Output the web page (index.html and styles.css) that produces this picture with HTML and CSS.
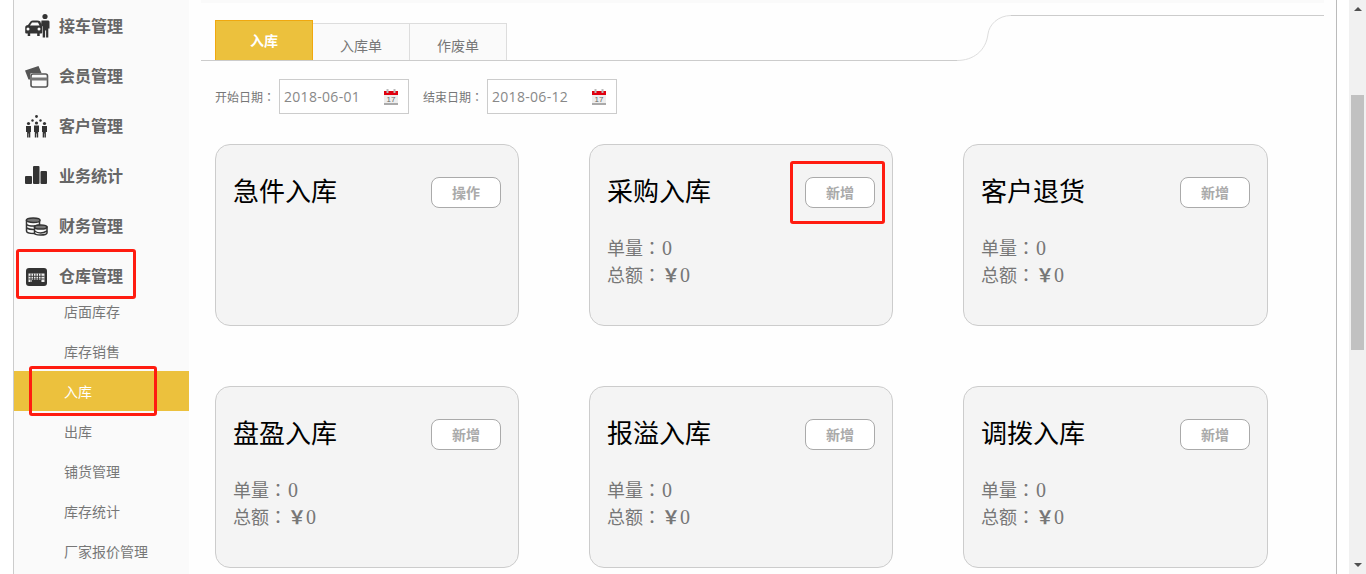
FILE: index.html
```html
<!DOCTYPE html>
<html lang="zh-CN">
<head>
<meta charset="utf-8">
<title>入库</title>
<link rel="stylesheet" href="styles.css">
</head>
<body>
<div class="window">
  <aside class="sidebar">
    <div class="nav-row">
      <svg class="nav-icon" viewBox="0 0 26 26"><circle cx="21" cy="4.500" r="2.600" fill="#333"/><path d="M17.500 8.500h7l1 1v7l-1.200 0v9h-2.200v-7h-1v7h-2.400v-11l-1.700-1z" fill="#333"/><path d="M4 13l2.500-3.500q1-1 2.500-1h4q2 0 3.500 1v.5l1 3q.7.800.7 2v5.500q0 1-1 1h-1.500v2.500h-2.500v-2.500h-7v2.500h-2.500v-2.500h-1.500q-1 0-1-1v-5q0-1.500 1-2z" fill="#333"/><path d="M6 13.500l2-3h6l1.500 3z" fill="#fafafa"/><circle cx="4" cy="17" r="1.500" fill="#fafafa"/><circle cx="15" cy="17" r="1.500" fill="#fafafa"/></svg>
      <span>接车管理</span>
    </div>
    <div class="nav-row">
      <svg class="nav-icon" viewBox="0 0 26 26"><path d="M1 8.500l13.500-4.500 3 7h-9.500q-2 0-2 2v4.500h-1.500z" fill="#555"/><rect x="7" y="12" width="16.500" height="13" rx="2" fill="#fafafa" stroke="#555" stroke-width="1.600"/><rect x="7" y="15.500" width="16.500" height="3" fill="#777"/></svg>
      <span>会员管理</span>
    </div>
    <div class="nav-row">
      <svg class="nav-icon" viewBox="0 0 26 26" fill="#333"><circle cx="12.500" cy="4.500" r="1.400"/><circle cx="8.500" cy="8.500" r="1.200"/><circle cx="16.500" cy="8.500" r="1.200"/><circle cx="4.500" cy="11.500" r="1.600"/><circle cx="12.500" cy="11" r="1.600"/><circle cx="20.500" cy="11.500" r="1.600"/><path d="M2 14h5v6h-.7v5.500h-1.400v-4h-.4v4h-1.400v-5.500h-1.100z"/><path d="M10 13.500h5v6.500h-.8v5.500h-1.400v-4h-.6v4h-1.400v-5.500h-.8z"/><path d="M18 14h5v6h-1.100v5.500h-1.400v-4h-.4v4h-1.400v-5.500h-.7z"/></svg>
      <span>客户管理</span>
    </div>
    <div class="nav-row">
      <svg class="nav-icon" viewBox="0 0 26 26" fill="#333"><rect x="1" y="14" width="7" height="8" rx="1"/><rect x="9" y="4" width="6.500" height="18" rx="1"/><rect x="16.500" y="9" width="6.500" height="13" rx="1"/></svg>
      <span>业务统计</span>
    </div>
    <div class="nav-row">
      <svg class="nav-icon" viewBox="0 0 26 26"><path d="M2.500 8.500v10.500q0 2.500 7.500 2.500h1v-7.500q3-1 4.500-1v-4.500z" fill="#fafafa" stroke="#333" stroke-width="1.500"/><ellipse cx="9.200" cy="8.200" rx="6.800" ry="2.300" fill="#777" stroke="#333" stroke-width="1.500"/><path d="M2.500 12.500q2 1.800 8.500 1.500M2.500 16q3 1.800 8.500 1.500" fill="none" stroke="#333" stroke-width="1.500"/><path d="M10.500 15v6q0 2 6 2t6.500-2v-6z" fill="#fafafa" stroke="#333" stroke-width="1.500"/><ellipse cx="16.700" cy="15" rx="6.200" ry="2.100" fill="#777" stroke="#333" stroke-width="1.500"/><path d="M10.500 19q3 2 6 2t6.500-2" fill="none" stroke="#333" stroke-width="1.500"/></svg>
      <span>财务管理</span>
    </div>
    <div class="nav-row">
      <svg class="nav-icon" viewBox="0 0 26 26"><path d="M2 9q0-3 3-3h15q3 0 3 3v12q0 3-3 3h-15q-3 0-3-3z" fill="#333"/><path d="M4.500 11.500h16v8.500h-3.500v-2h-9v2h-3.500z" fill="#eee"/><path d="M7 11.500v8.500M9.500 11.500v6.500M12 11.500v6.500M14.500 11.500v6.500M17 11.500v8.500M4.500 14.300h16M4.500 17h16" stroke="#333" stroke-width=".9"/></svg>
      <span>仓库管理</span>
    </div>
    <ul class="sub-list">
      <li class="sub-item">店面库存</li>
      <li class="sub-item">库存销售</li>
      <li class="sub-item is-active">入库</li>
      <li class="sub-item">出库</li>
      <li class="sub-item">铺货管理</li>
      <li class="sub-item">库存统计</li>
      <li class="sub-item">厂家报价管理</li>
    </ul>
  </aside>

  <main class="main">
    <div class="top-strip"></div>
    <div class="tabbar">
      <div class="tabs">
        <div class="tab is-active">入库</div>
        <div class="tab">入库单</div>
        <div class="tab">作废单</div>
      </div>
      <svg class="tab-curve" viewBox="0 0 54 46" width="54" height="46"><path d="M0 45.500C16 45.500 29 36 31 19 32 10 41 .5 54 .5" fill="none" stroke="#ddd"/></svg>
      <div class="tab-rest"></div>
    </div>

    <div class="filters">
      <label class="filter-label">开始日期<span class="colon" lang="zh-Hant">：</span></label>
      <div class="date-field">
        <span>2018-06-01</span>
        <svg class="cal" viewBox="0 0 14 16" width="14" height="16"><rect y="2" width="14" height="14" fill="#eee"/><rect y="14" width="14" height="2" fill="#aaa"/><rect y="2" width="14" height="4" fill="#e0000f"/><rect x="2.500" width="2" height="4" fill="#bbb"/><rect x="9.500" width="2" height="4" fill="#bbb"/><text x="2.500" y="13" class="cal-num">17</text></svg>
      </div>
      <label class="filter-label filter-label-end">结束日期<span class="colon" lang="zh-Hant">：</span></label>
      <div class="date-field">
        <span>2018-06-12</span>
        <svg class="cal" viewBox="0 0 14 16" width="14" height="16"><rect y="2" width="14" height="14" fill="#eee"/><rect y="14" width="14" height="2" fill="#aaa"/><rect y="2" width="14" height="4" fill="#e0000f"/><rect x="2.500" width="2" height="4" fill="#bbb"/><rect x="9.500" width="2" height="4" fill="#bbb"/><text x="2.500" y="13" class="cal-num">17</text></svg>
      </div>
    </div>

    <section class="cards">
      <article class="card">
        <header class="card-head"><h2>急件入库</h2><button class="btn">操作</button></header>
      </article>
      <article class="card">
        <header class="card-head"><h2>采购入库</h2><button class="btn">新增</button></header>
        <p class="stat">单量<span class="colon" lang="zh-Hant">：</span><span class="num">0</span></p>
        <p class="stat">总额<span class="colon" lang="zh-Hant">：</span><span class="yen">￥</span><span class="num">0</span></p>
      </article>
      <article class="card">
        <header class="card-head"><h2>客户退货</h2><button class="btn">新增</button></header>
        <p class="stat">单量<span class="colon" lang="zh-Hant">：</span><span class="num">0</span></p>
        <p class="stat">总额<span class="colon" lang="zh-Hant">：</span><span class="yen">￥</span><span class="num">0</span></p>
      </article>
      <article class="card">
        <header class="card-head"><h2>盘盈入库</h2><button class="btn">新增</button></header>
        <p class="stat">单量<span class="colon" lang="zh-Hant">：</span><span class="num">0</span></p>
        <p class="stat">总额<span class="colon" lang="zh-Hant">：</span><span class="yen">￥</span><span class="num">0</span></p>
      </article>
      <article class="card">
        <header class="card-head"><h2>报溢入库</h2><button class="btn">新增</button></header>
        <p class="stat">单量<span class="colon" lang="zh-Hant">：</span><span class="num">0</span></p>
        <p class="stat">总额<span class="colon" lang="zh-Hant">：</span><span class="yen">￥</span><span class="num">0</span></p>
      </article>
      <article class="card">
        <header class="card-head"><h2>调拨入库</h2><button class="btn">新增</button></header>
        <p class="stat">单量<span class="colon" lang="zh-Hant">：</span><span class="num">0</span></p>
        <p class="stat">总额<span class="colon" lang="zh-Hant">：</span><span class="yen">￥</span><span class="num">0</span></p>
      </article>
    </section>
  </main>

  <div class="scrollbar">
    <span class="arrow arrow-up"></span>
    <span class="thumb"></span>
    <span class="arrow arrow-down"></span>
  </div>

  <div class="mark mark-nav"></div>
  <div class="mark mark-sub"></div>
  <div class="mark mark-btn"></div>
</div>
</body>
</html>
```

FILE: styles.css
```css
* { box-sizing: border-box; }
html, body { margin: 0; height: 574px; overflow: hidden; background: #fff; }
body { font-family: "Noto Sans CJK SC", sans-serif; }

.window { position: relative; display: flex; height: 574px; padding-left: 13px; }

.sidebar {
  flex: none; width: 176px; height: 100%;
  background: #fafafa; border-left: 1px solid #ccc;
  color: #666;
}
.nav-row { display: flex; align-items: center; gap: 9px; height: 50px; padding-left: 10px; font-size: 16px; font-weight: 700; }
.nav-icon { flex: none; width: 26px; height: 26px; }
.sub-list { list-style: none; margin: -9px 0 0; padding: 0; }
.sub-item { height: 40px; line-height: 40px; padding-left: 50px; font-size: 14px; color: #777; }
.sub-item.is-active { background: #ecc13d; color: #fff; }

.main {
  flex: none; width: 1148px; height: 100%; padding: 0 12px;
  border-right: 1px solid #bbb; background: #fefefe;
}
.top-strip { height: 3px; background: #fafafa; }

.tabbar { display: flex; height: 46px; margin-top: 12px; }
.tabs { flex: none; width: 756px; display: flex; align-items: flex-end; padding-left: 14px; border-bottom: 1px solid #ccc; }
.tab {
  width: 98px; height: 37px; padding-top: 11px; text-align: center;
  font-size: 14px; line-height: 20px; color: #777;
  background: #fafafa; border: 1px solid #ddd; border-bottom: 0; margin-left: -1px;
}
.tab.is-active {
  position: relative; z-index: 1;
  height: 40px; padding-top: 9px; margin-left: 0; font-weight: 700; color: #fff;
  background: #ecc13d; border: 1px solid #f0a80f; border-bottom: 0;
}
.tab-curve { flex: none; display: block; }
.tab-rest { flex: 1; border-top: 1px solid #ccc; }

.filters { display: flex; align-items: center; height: 35px; margin-top: 18px; padding-left: 14px; }
.filter-label { width: 64px; font-size: 12px; color: #777; }
.filter-label-end { margin-left: 14px; }
.colon { font-family: "Noto Sans CJK TC", sans-serif; }
.date-field {
  display: flex; align-items: center; justify-content: space-between;
  width: 130px; height: 35px; padding: 0 10px 0 4px;
  background: #fff; border: 1px solid #ccc;
  font: 14px "Open Sans", sans-serif; letter-spacing: .3px; color: #888;
}
.cal { flex: none; display: block; }
.cal-num { font: 8px "Liberation Sans", sans-serif; fill: #666; letter-spacing: 0; }

.cards { display: grid; grid-template-columns: 304px 304px 305px; column-gap: 70px; row-gap: 60px; margin-top: 30px; padding-left: 14px; }
.card { height: 182px; padding: 0 17px; background: #f4f4f4; border: 1px solid #ccc; border-radius: 15px; }
.card-head { display: flex; justify-content: space-between; align-items: flex-start; height: 89px; }
.card-head h2 { margin: 27px 0 0; font-size: 26px; line-height: 36px; font-weight: 400; color: #000; }
.btn {
  width: 70px; height: 31px; margin-top: 32px; padding: 0 0 2px; background: #fff;
  border: 1px solid #aaa; border-radius: 8px;
  font: 700 14px "Noto Sans CJK SC", sans-serif; color: #aaa;
}
.stat { margin: 0; height: 27px; font-size: 18px; line-height: 27px; color: #777; }
.stat .colon { margin-right: 1px; }
.num { font-family: "Liberation Serif", serif; font-size: 20px; line-height: 1; }
.yen { font-weight: 700; }

.scrollbar {
  display: flex; flex-direction: column; align-items: center;
  flex: none; width: 17px; height: 100%; margin-left: 12px; padding: 7px 0; background: #f1f1f1;
}
.arrow { flex: none; width: 0; height: 0; border-left: 4px solid transparent; border-right: 4px solid transparent; }
.arrow-up { border-bottom: 4px solid #505050; }
.arrow-down { margin-top: auto; border-top: 4px solid #505050; }
.thumb { flex: none; width: 13px; height: 255px; margin-top: 84px; background: #c1c1c1; }

.mark { position: absolute; border: 3px solid #ff1c10; border-radius: 3px; }
.mark-nav { left: 16px; top: 249px; width: 120px; height: 50px; }
.mark-sub { left: 29px; top: 366px; width: 128px; height: 50px; }
.mark-btn { left: 790px; top: 161px; width: 95px; height: 63px; }
```
